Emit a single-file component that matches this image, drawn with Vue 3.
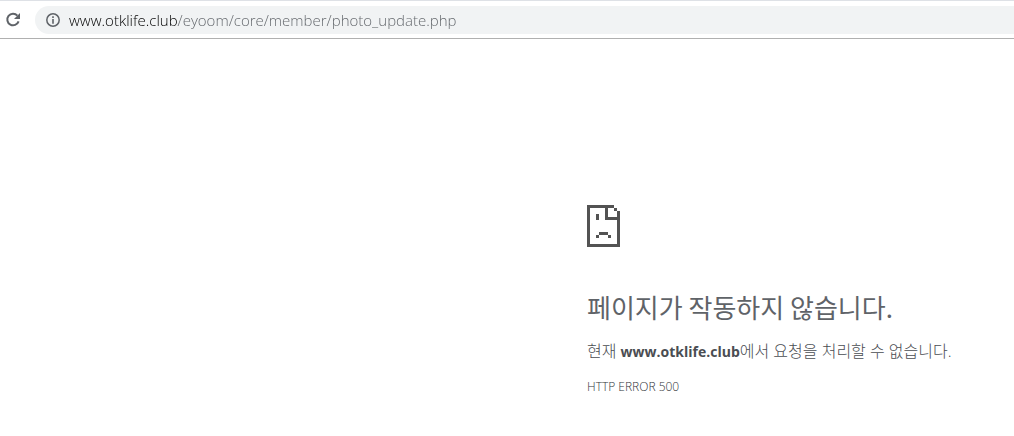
<script setup>
import { ref } from 'vue'

const address = ref('www.otklife.club/eyoom/core/member/photo_update.php')
</script>

<template>
  <div class="browser">
    <header class="toolbar">
      <button class="icon-button" type="button" aria-label="새로고침">
        <svg width="16" height="16" viewBox="0 0 16 16" aria-hidden="true">
          <path d="M12.4 3.6A5.8 5.8 0 1 0 13.6 9.4" fill="none" stroke="#5f6368" stroke-width="2" />
          <path d="M15 1v6H9z" fill="#5f6368" />
        </svg>
      </button>
      <div class="omnibox">
        <button class="icon-button" type="button" aria-label="사이트 정보">
          <svg width="14" height="14" viewBox="0 0 14 14" aria-hidden="true">
            <circle cx="7" cy="7" r="6.2" fill="none" stroke="#5f6368" stroke-width="1.5" />
            <path d="M6.2 3.3h1.6v1.6H6.2zM6.2 6.1h1.6v4.6H6.2z" fill="#5f6368" />
          </svg>
        </button>
        <input v-model="address" class="address" type="text" aria-label="주소창" spellcheck="false" />
      </div>
    </header>

    <main class="error">
      <svg class="sad-page" width="33" height="42" viewBox="0 0 11 14" shape-rendering="crispEdges" aria-hidden="true">
        <path
          fill="#535353"
          d="M0 0h9v1H7v3h4v1H6V1H1v12h9V2h1v12H0zM9 1h1v1H9zM3 3h1v2H3zM4 9h3v1H4zM3 10h1v1H3zM7 10h1v1H7z"
        />
      </svg>
      <h1>페이지가 작동하지 않습니다.</h1>
      <p class="summary">현재 <strong>www.otklife.club</strong>에서 요청을 처리할 수 없습니다.</p>
      <p class="code">HTTP ERROR 500</p>
    </main>
  </div>
</template>

<style>
body {
  margin: 0;
  background: #fff;
}
</style>

<style scoped>
.browser {
  font-family: "Open Sans", "Noto Sans CJK KR", sans-serif;
  color: #5f6368;
}

.toolbar {
  display: flex;
  align-items: center;
  gap: 14px;
  padding: 5px 0 4px 5px;
  border-top: 1px solid #dee1e6;
  border-bottom: 1px solid #b0b0b0;
}

.icon-button {
  display: flex;
  flex: none;
  padding: 0;
  border: 0;
  background: none;
}

.omnibox {
  display: flex;
  flex: 1;
  align-items: center;
  gap: 9px;
  height: 28px;
  padding-left: 11px;
  border-radius: 14px 0 0 14px;
  background: #f1f3f4;
}

.address {
  flex: 1;
  min-width: 0;
  padding: 0;
  border: 0;
  outline: 0;
  font: inherit;
  font-size: 15px;
  font-weight: 300;
  line-height: 20px;
  color: transparent;
  background: linear-gradient(to right, #000 109px, #5f6368 109px);
  background-clip: text;
  -webkit-background-clip: text;
}

.error {
  padding: 166px 24px 40px 587px;
}

.sad-page {
  display: block;
}

h1 {
  margin: 44px 0 0;
  font-family: "Noto Sans CJK KR", sans-serif;
  font-size: 26px;
  font-weight: 400;
  line-height: 32px;
  white-space: nowrap;
}

.summary {
  margin: 16px 0 0;
  font-size: 16px;
  font-weight: 300;
  line-height: 24px;
  color: #4a4d52;
  white-space: nowrap;
}

.summary strong {
  font-size: 14px;
  font-weight: 700;
}

.code {
  margin: 14px 0 0;
  font-size: 12px;
  font-weight: 300;
  line-height: 18px;
  color: #303338;
}
</style>
